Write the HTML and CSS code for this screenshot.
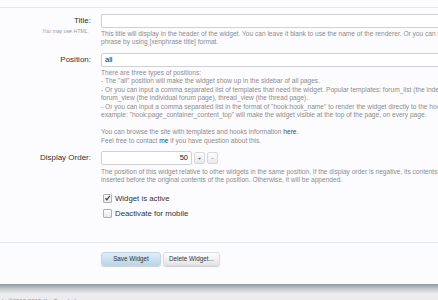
FILE: index.html
```html
<!DOCTYPE html>
<html>
<head>
<meta charset="utf-8">
<link rel="stylesheet" href="styles.css">
</head>
<body>
<div class="page">
  <div class="topline"></div>
  <form class="form">
    <div class="row row-title">
      <div class="label">
        <span class="label-text">Title:</span>
        <span class="explain">You may use HTML.</span>
      </div>
      <div class="ctrl">
        <div class="input"></div>
        <p class="hint">This title will display in the header of the widget. You can leave it blank to use the name of the renderer. Or you can use a<br>phrase by using [xenphrase title] format.</p>
      </div>
    </div>
    <div class="row row-position">
      <div class="label"><span class="label-text">Position:</span></div>
      <div class="ctrl">
        <div class="input"><span class="value">all</span></div>
        <p class="hint">There are three types of positions:<br>
- The "all" position will make the widget show up in the sidebar of all pages.<br>
- Or you can input a comma separated list of templates that need the widget. Popular templates: forum_list (the index page),<br>
forum_view (the individual forum page), thread_view (the thread page).<br>
- Or you can input a comma separated list in the format of "hook:hook_name" to render the widget directly to the hook. For<br>
example: "hook:page_container_content_top" will make the widget visible at the top of the page, on every page.<br>
<br>
You can browse the site with templates and hooks information <a>here</a>.<br>
Feel free to contact <a>me</a> if you have question about this.</p>
      </div>
    </div>
    <div class="row row-order">
      <div class="label"><span class="label-text">Display Order:</span></div>
      <div class="ctrl">
        <div class="spin">
          <div class="input num"><span class="value">50</span></div>
          <span class="spinbtn">+</span>
          <span class="spinbtn">-</span>
        </div>
        <p class="hint">The position of this widget relative to other widgets in the same position. If the display order is negative, its contents will be<br>inserted before the original contents of the position. Otherwise, it will be appended.</p>
        <ul class="checks">
          <li><span class="box"><svg viewBox="0 0 8 8" width="8" height="8"><path d="M1.6 4.2 L3.2 6 L6.6 1.6" fill="none" stroke="#3a3a3a" stroke-width="1.3"/></svg></span>Widget is active</li>
          <li><span class="box"></span>Deactivate for mobile</li>
        </ul>
      </div>
    </div>
    <div class="submit">
      <span class="btn primary">Save Widget</span>
      <span class="btn">Delete Widget...</span>
    </div>
  </form>
  <div class="shadow"></div>
  <div class="footer"><span class="copy">Copyright ©2010-2015 XenForo Ltd.</span></div>
</div>
</body>
</html>
```

FILE: styles.css
```css
html, body {
  margin: 0;
  padding: 0;
}
body {
  width: 438px;
  height: 300px;
  overflow: hidden;
  background: #fcfcff;
  font-family: "Liberation Sans", Arial, sans-serif;
  color: #333;
}
.page {
  width: 600px;
}
.topline {
  height: 7px;
  border-bottom: 1px solid #e6e6ea;
}
.form {
  display: block;
  margin: 0;
}
.row {
  display: grid;
  grid-template-columns: 91px 480px;
  column-gap: 10px;
}
.row-title { margin-top: 6px; }
.row-position { margin-top: 6px; }
.row-order { margin-top: 6px; }
.label {
  display: flex;
  flex-direction: column;
  align-items: flex-end;
}
.label-text {
  font-size: 8px;
  line-height: 14px;
  color: #333;
}
.explain {
  font-size: 5.2px;
  font-style: italic;
  color: #9a9a9a;
  margin-right: 2px;
  line-height: 6px;
}
.input {
  height: 12px;
  border: 1px solid #cfd1d6;
  border-radius: 2px;
  background: #fff;
  display: flex;
  align-items: center;
  padding: 0 3px;
}
.value {
  font-size: 7.5px;
  color: #222;
}
.hint {
  margin: 2px 0 0;
  font-size: 6.6px;
  line-height: 8.45px;
  color: #8c8c8c;
  white-space: nowrap;
}
.hint a {
  color: #2b4a66;
}
.spin {
  display: flex;
  align-items: center;
  gap: 2px;
}
.input.num {
  width: 83px;
  justify-content: flex-end;
}
.spinbtn {
  width: 9px;
  height: 10px;
  border: 1px solid #d8d8dc;
  border-radius: 2px;
  background: linear-gradient(#fdfdfd, #e8e8ec);
  font-size: 6px;
  color: #555;
  display: flex;
  align-items: center;
  justify-content: center;
}
.row-order .hint { margin-top: 3px; }
.checks {
  list-style: none;
  margin: 6px 0 0;
  padding: 0;
}
.checks li {
  display: flex;
  align-items: center;
  font-size: 7.8px;
  line-height: 15px;
  color: #333;
}
.box {
  width: 7px;
  height: 7px;
  border: 1px solid #b0b0b4;
  border-radius: 1px;
  background: linear-gradient(#fff, #e6e6ea);
  margin: 0 3px 0 2px;
  display: flex;
  align-items: center;
  justify-content: center;
}
.box svg {
  width: 8px;
  height: 8px;
}
.submit {
  margin-top: 21px;
  border-top: 1px solid #e2eaee;
  height: 42px;
  padding-left: 101px;
  display: flex;
  align-items: flex-start;
  gap: 2px;
  padding-top: 9px;
  box-sizing: border-box;
}
.btn {
  height: 12px;
  padding: 0 5px;
  border-radius: 3px;
  font-size: 6.3px;
  line-height: 12px;
  color: #333;
  background: linear-gradient(#ffffff, #e4e4e8);
  box-shadow: 0 1px 1px rgba(0,0,0,0.18);
  border: 1px solid #dcdce0;
}
.btn.primary {
  width: 48px;
  text-align: center;
  background: linear-gradient(#e0edf7, #b9d5ea);
  border-color: #c4d6e4;
}
.shadow {
  height: 9px;
  background: linear-gradient(#8f989e, #c6cbcf 55%, #e6e6e8);
}
.footer {
  background: #ececee;
  height: 20px;
  overflow: hidden;
}
.copy {
  display: block;
  margin-left: -19px;
  font-size: 6px;
  line-height: 9px;
  padding-top: 4px;
  color: #8c8c90;
  white-space: nowrap;
}
```
